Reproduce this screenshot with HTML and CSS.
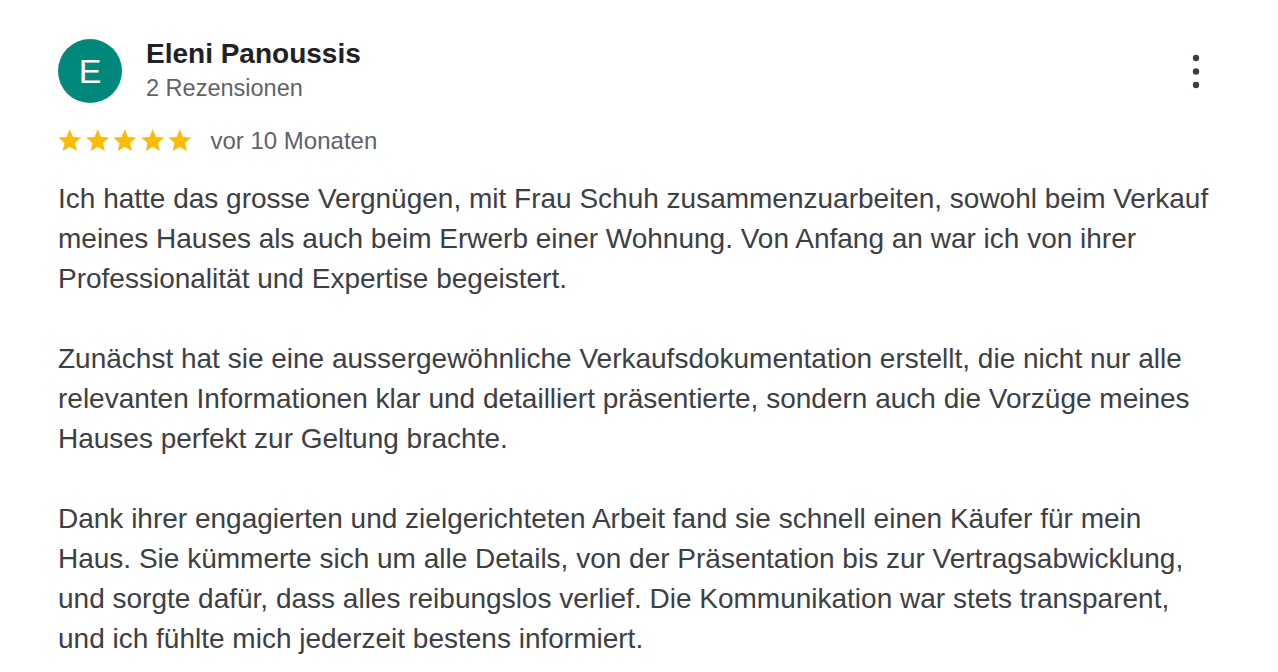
FILE: index.html
```html
<!DOCTYPE html>
<html lang="de">
<head>
<meta charset="utf-8">
<title>Rezension</title>
<link rel="stylesheet" href="styles.css">
</head>
<body>
<div class="review">
  <div class="header">
    <div class="avatar">E</div>
    <div class="author">
      <div class="name">Eleni Panoussis</div>
      <div class="count">2 Rezensionen</div>
    </div>
    <button class="menu" aria-label="Mehr">
      <svg viewBox="0 0 24 40" width="24" height="40"><circle cx="12" cy="7" r="3.2"/><circle cx="12" cy="20.5" r="3.2"/><circle cx="12" cy="34" r="3.2"/></svg>
    </button>
  </div>
  <div class="meta">
    <div class="stars">
      <svg viewBox="0 0 24 24"><path d="M12 17.27L18.18 21l-1.64-7.03L22 9.24l-7.19-.61L12 2 9.19 8.63 2 9.24l5.46 4.73L5.82 21z"/></svg>
      <svg viewBox="0 0 24 24"><path d="M12 17.27L18.18 21l-1.64-7.03L22 9.24l-7.19-.61L12 2 9.19 8.63 2 9.24l5.46 4.73L5.82 21z"/></svg>
      <svg viewBox="0 0 24 24"><path d="M12 17.27L18.18 21l-1.64-7.03L22 9.24l-7.19-.61L12 2 9.19 8.63 2 9.24l5.46 4.73L5.82 21z"/></svg>
      <svg viewBox="0 0 24 24"><path d="M12 17.27L18.18 21l-1.64-7.03L22 9.24l-7.19-.61L12 2 9.19 8.63 2 9.24l5.46 4.73L5.82 21z"/></svg>
      <svg viewBox="0 0 24 24"><path d="M12 17.27L18.18 21l-1.64-7.03L22 9.24l-7.19-.61L12 2 9.19 8.63 2 9.24l5.46 4.73L5.82 21z"/></svg>
    </div>
    <span class="date">vor 10 Monaten</span>
  </div>
  <div class="text">
    <p>Ich hatte das grosse Vergnügen, mit Frau Schuh zusammenzuarbeiten, sowohl beim Verkauf meines Hauses als auch beim Erwerb einer Wohnung. Von Anfang an war ich von ihrer Professionalität und Expertise begeistert.</p>
    <p>Zunächst hat sie eine aussergewöhnliche Verkaufsdokumentation erstellt, die nicht nur alle relevanten Informationen klar und detailliert präsentierte, sondern auch die Vorzüge meines Hauses perfekt zur Geltung brachte.</p>
    <p>Dank ihrer engagierten und zielgerichteten Arbeit fand sie schnell einen Käufer für mein Haus. Sie kümmerte sich um alle Details, von der Präsentation bis zur Vertragsabwicklung, und sorgte dafür, dass alles reibungslos verlief. Die Kommunikation war stets transparent, und ich fühlte mich jederzeit bestens informiert.</p>
  </div>
</div>
</body>
</html>
```
FILE: styles.css
```css
html, body {
  margin: 0;
  padding: 0;
  background: #ffffff;
}
body {
  font-family: "Liberation Sans", Arial, Helvetica, sans-serif;
  overflow: hidden;
  height: 672px;
}
.review {
  padding: 38px 64px 0 58px;
}
.header {
  display: flex;
  align-items: flex-start;
  padding-right: 6px;
}
.avatar {
  width: 64px;
  height: 64px;
  margin-top: 1px;
  border-radius: 50%;
  background: #00897b;
  color: #ffffff;
  font-size: 34px;
  line-height: 64px;
  text-align: center;
  flex: none;
}
.author {
  margin-left: 24px;
  flex: 1;
}
.name {
  font-size: 28px;
  font-weight: bold;
  color: #202124;
  line-height: 32px;
}
.count {
  margin-top: 2px;
  font-size: 23.5px;
  line-height: 32px;
  color: #5f6368;
}
.menu {
  border: 0;
  background: none;
  padding: 0;
  margin-top: 13px;
  width: 24px;
  height: 40px;
  fill: #3c4043;
  cursor: pointer;
}
.menu svg {
  display: block;
}
.meta {
  display: flex;
  align-items: center;
  margin-top: 23px;
  height: 28px;
}
.stars {
  display: flex;
  margin-left: -2px;
}
.stars svg {
  width: 27.5px;
  height: 27.5px;
  fill: #fbbc04;
  display: block;
}
.date {
  margin-left: 17px;
  font-size: 24px;
  color: #5f6368;
}
.text {
  margin-top: 24px;
  font-size: 28px;
  line-height: 40px;
  color: #3c4043;
}
.text p {
  margin: 0 0 40px 0;
}
```
